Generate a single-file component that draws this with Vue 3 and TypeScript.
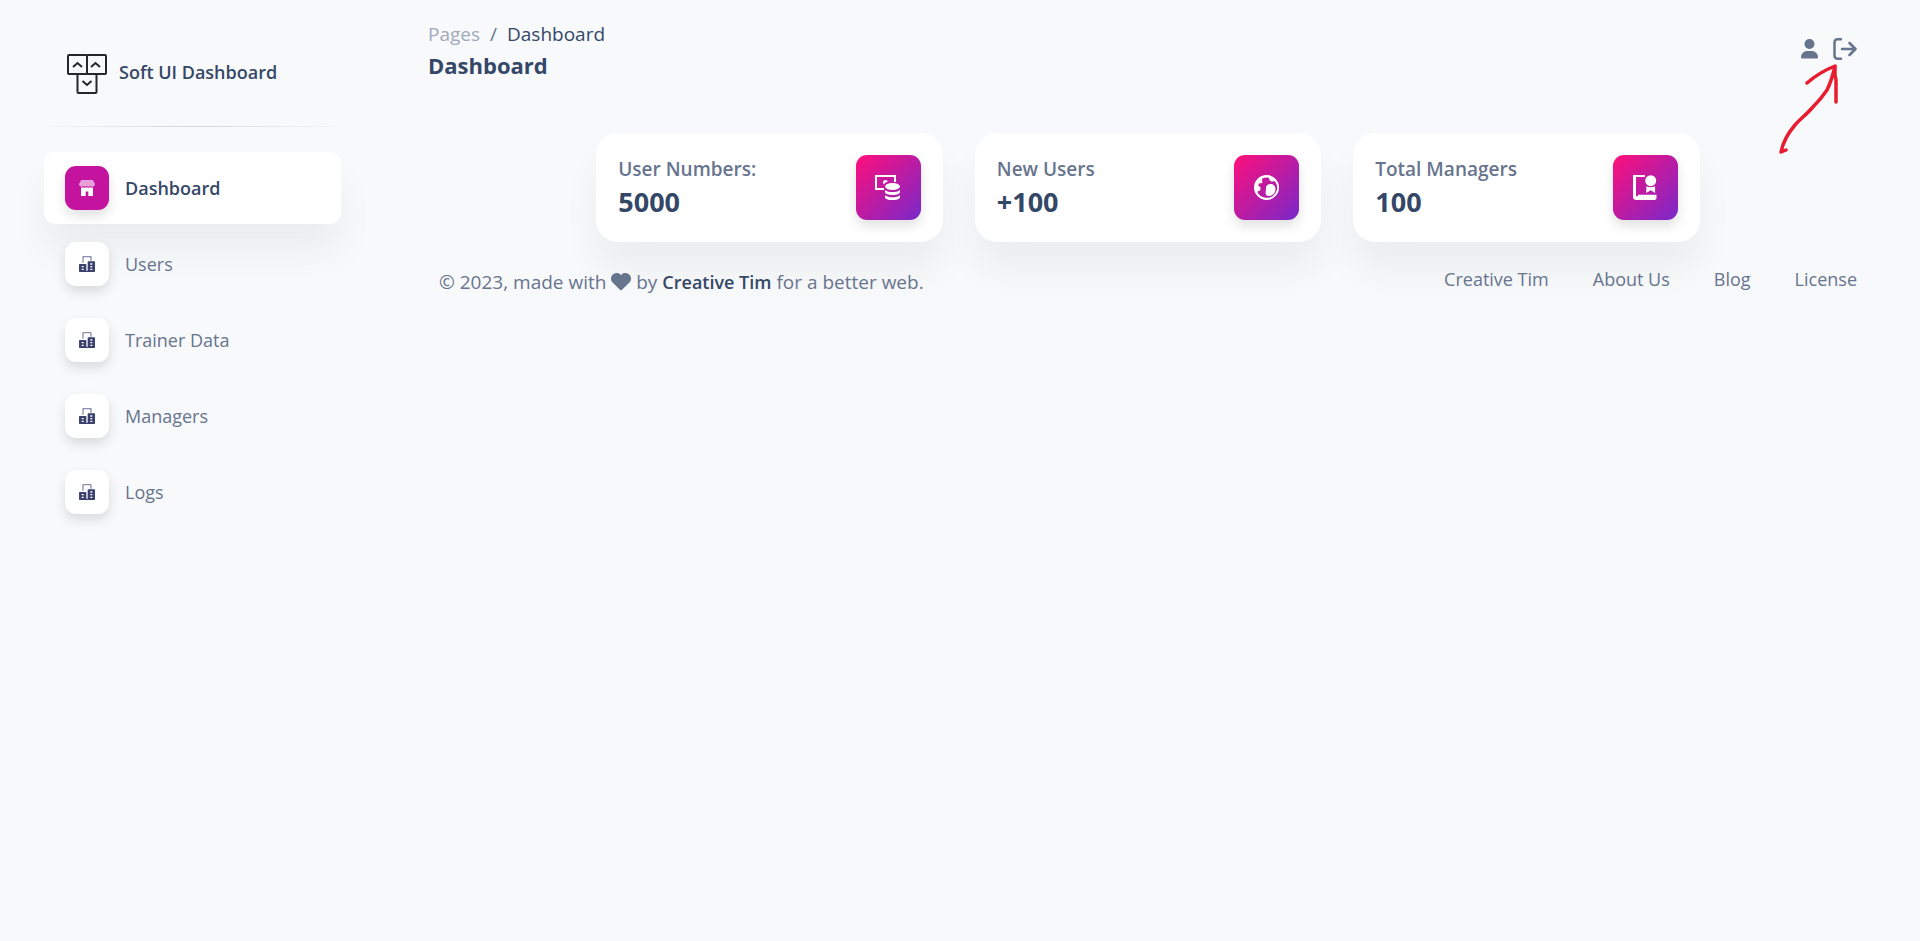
<script setup lang="ts">
interface NavItem {
  label: string
  icon: 'shop' | 'office'
  active: boolean
}

interface Stat {
  label: string
  value: string
  icon: 'coins' | 'world' | 'diploma'
}

const navItems: NavItem[] = [
  { label: 'Dashboard', icon: 'shop', active: true },
  { label: 'Users', icon: 'office', active: false },
  { label: 'Trainer Data', icon: 'office', active: false },
  { label: 'Managers', icon: 'office', active: false },
  { label: 'Logs', icon: 'office', active: false },
]

const stats: Stat[] = [
  { label: 'User Numbers:', value: '5000', icon: 'coins' },
  { label: 'New Users', value: '+100', icon: 'world' },
  { label: 'Total Managers', value: '100', icon: 'diploma' },
]

const footerLinks: string[] = ['Creative Tim', 'About Us', 'Blog', 'License']
</script>

<template>
  <div class="layout">
    <aside class="sidebar">
      <a class="brand" href="#">
        <svg class="brand-logo" viewBox="0 0 40 40" fill="none" stroke="#252827" stroke-width="2" aria-hidden="true">
          <rect x="1" y="1" width="19" height="19" rx="1" />
          <rect x="20" y="1" width="19" height="19" rx="1" />
          <rect x="10.500" y="20" width="19" height="19" rx="1" />
          <path d="M6 13l4.500-4 4.500 4M24 13l4.500-4 4.500 4M15.500 27l4.500 4 4.500-4" />
        </svg>
        <span class="brand-name">Soft UI Dashboard</span>
      </a>
      <hr class="divider" />
      <nav class="nav" aria-label="Main">
        <a
          v-for="item in navItems"
          :key="item.label"
          href="#"
          class="nav-link"
          :class="{ active: item.active }"
        >
          <span class="nav-icon">
            <svg v-if="item.icon === 'shop'" viewBox="0 0 47 47" fill="#fff" aria-hidden="true">
              <path opacity="0.6" d="M46.720 10.741L40.845.950A1.960 1.960 0 0 0 39.167 0H7.833c-.687 0-1.324.361-1.678.950L.280 10.741A1.960 1.960 0 0 0 0 11.750c0 4.316 3.484 7.822 7.800 7.833 1.950.005 3.817-.711 5.252-2.007 2.965 2.680 7.477 2.680 10.442 0 2.966 2.686 7.485 2.686 10.452 0 2.296 2.072 5.598 2.595 8.422 1.334A7.800 7.800 0 0 0 47 11.750c0-.355-.097-.704-.280-1.009z" />
              <path d="M39.198 22.491c-1.820.002-3.616-.476-5.246-1.396-2.809 1.589-6.027 1.837-8.968.705a12 12 0 0 1-1.488-.698c-2.800 1.585-6.017 1.832-8.957.698a12 12 0 0 1-1.487-.698 10.600 10.600 0 0 1-7.177 1.189v22.431c0 1.228.877 2.223 1.958 2.223h11.750V33.607h7.834v13.338h11.750c1.081 0 1.958-.995 1.958-2.223v-22.440c-.636.130-1.281.200-1.927.209z" />
            </svg>
            <svg v-else viewBox="0 0 42 42" fill="#3a416f" aria-hidden="true">
              <path opacity="0.6" d="M12.250 17.500h-3.500V1.750C8.750.782 9.532 0 10.500 0h21c.968 0 1.750.782 1.750 1.750v10.500h-3.500V3.500h-17.500z" />
              <path d="M40.250 14H24.500c-.968 0-1.750.782-1.750 1.750V38.500h-3.500V22.750c0-.968-.782-1.750-1.750-1.750H1.750C.782 21 0 21.782 0 22.750v17.500C0 41.218.782 42 1.750 42h38.500c.968 0 1.750-.782 1.750-1.750v-24.500c0-.968-.782-1.750-1.750-1.750zm-28 22.750H7v-3.500h5.250zm0-7H7v-3.500h5.250zm22.750 7h-5.250v-3.500H35zm0-7h-5.250v-3.500H35zm0-7h-5.250v-3.500H35z" />
            </svg>
          </span>
          <span>{{ item.label }}</span>
        </a>
      </nav>
    </aside>

    <div class="page">
      <header class="topbar">
        <div>
          <nav class="breadcrumb" aria-label="Breadcrumb">
            <a href="#">Pages</a>
            <span>/</span>
            <span class="current">Dashboard</span>
          </nav>
          <h1 class="title">Dashboard</h1>
        </div>
        <div class="actions">
          <button class="icon-button" type="button" aria-label="Profile">
            <svg width="17" height="20" viewBox="0 0 17 20" fill="currentColor" aria-hidden="true">
              <circle cx="8.500" cy="5" r="5" />
              <path d="M0 18.500C0 14.500 3 12 6.500 12h4c3.500 0 6.500 2.500 6.500 6.500 0 .6-.3.900-.9.900H.9c-.6 0-.9-.3-.9-.9z" />
            </svg>
          </button>
          <button class="icon-button" type="button" aria-label="Sign out">
            <svg width="24" height="22" viewBox="0 0 24 22" fill="none" stroke="currentColor" stroke-width="2.500" stroke-linecap="round" stroke-linejoin="round" aria-hidden="true">
              <path d="M8 1.300H4.500a3 3 0 0 0-3 3v13.400a3 3 0 0 0 3 3H8M9 11h13M16.500 5l6 6-6 6" />
            </svg>
          </button>
        </div>
      </header>

      <main class="stats">
        <div v-for="stat in stats" :key="stat.label" class="stat-column">
          <section class="card">
            <div>
              <p class="stat-label">{{ stat.label }}</p>
              <p class="stat-value">{{ stat.value }}</p>
            </div>
            <div class="stat-icon">
              <svg v-if="stat.icon === 'coins'" viewBox="0 0 26 26" fill="#fff" aria-hidden="true">
                <path d="M0 0h21v7h-2V2H2v11h7v2H0z" />
                <path d="M8 7.500C8 6 9 5 10.500 5c1.200 0 1.900.6 2.300 1.500C11 7.200 9.500 8 9 9.500 8.400 9 8 8.300 8 7.500z" />
                <ellipse cx="17.500" cy="11.500" rx="7.500" ry="3.500" />
                <path d="M10 15c2 1.700 4.600 2 7.500 2s5.500-.3 7.500-2v2c0 1.700-3.400 3-7.500 3S10 18.700 10 17z" />
                <path d="M10 20.300c2 1.600 4.600 2 7.500 2s5.500-.4 7.500-2v1.900c0 1.700-3.400 2.900-7.500 2.900S10 23.900 10 22.200z" />
              </svg>
              <svg v-else-if="stat.icon === 'world'" viewBox="0 0 26 26" fill="#fff" aria-hidden="true">
                <path fill-rule="evenodd" d="M12.500 0a12.500 12.500 0 1 0 0 25 12.500 12.500 0 0 0 0-25zM8 3.800c1.800-1 3.800-1.500 6-1.200 1 .6 1.500 1.500 1.600 2.600l1.700 1.300 3.600-.2a10.200 10.200 0 0 1-9.400 16.400C7.500 22 4.500 20 3.300 16.800l3-1.600.2-2.900-2.300-1.800L5 8.500l3.300-.4z" />
                <path d="M12 13c0-2.500 2-4 4.500-4 2.800 0 5 2 5 5 0 4-3 7-6.500 7-2.300 0-3.600-1.500-3.400-3.500.1-1.500.4-3 .4-4.500z" />
              </svg>
              <svg v-else viewBox="0 0 26 26" fill="#fff" aria-hidden="true">
                <path d="M1 0h12v2H4v18c.1 2 2 2 2-.2h18.500V23a2 2 0 0 1-2 2h-18A3.500 3.500 0 0 1 1 21.500z" />
                <circle cx="18.700" cy="5.700" r="5.500" />
                <path d="M14.300 11.200c2.700 1.500 6.100 1.500 8.800 0V18l-4.400-2.800-4.400 2.800z" />
              </svg>
            </div>
          </section>
        </div>
      </main>

      <footer class="footer">
        <p class="copyright">
          © 2023, made with
          <svg class="heart" viewBox="0 0 20 18" fill="currentColor" aria-hidden="true">
            <path d="M10 2.200C8-.6 4.100-.6 1.800 1.400-.6 3.700-.6 7.300 1.600 9.600L9.200 17c.5.400 1.100.4 1.600 0l7.600-7.400c2.200-2.300 2.200-5.900-.2-8.200C15.900-.6 12-.6 10 2.200z" />
          </svg>
          by <a href="#">Creative Tim</a> for a better web.
        </p>
        <nav class="footer-links" aria-label="Footer">
          <a v-for="link in footerLinks" :key="link" href="#">{{ link }}</a>
        </nav>
      </footer>
    </div>

    <svg class="pointer" width="64" height="94" viewBox="0 0 64 94" fill="none" stroke="#e81c2e" stroke-width="3.500" stroke-linecap="round" stroke-linejoin="round" aria-hidden="true">
      <path d="M7 86l-5 2C4 78 10 68 16 61c5-6 11-10 17-17 6-6 11-12 15-18 3-6 5-12 7-20M28 19c8-7 18-13 28-17v9l1 5v22" />
    </svg>
  </div>
</template>

<style>
body {
  margin: 0;
  background: #f8f9fb;
}
</style>

<style scoped>
.layout {
  position: relative;
  display: flex;
  min-height: 100vh;
  background: #f8f9fb;
  color: #67748e;
  font-family: "Open Sans", "Noto Sans", sans-serif;
  font-size: 19px;
  line-height: 28px;
}

a {
  color: inherit;
  text-decoration: none;
}

p,
h1 {
  margin: 0;
}

.sidebar {
  flex: none;
  box-sizing: border-box;
  width: 376px;
  padding: 22px 24px 0 33px;
}

.brand {
  display: flex;
  align-items: flex-start;
  gap: 12px;
  height: 104px;
  padding: 32px 0 0 34px;
  box-sizing: border-box;
  color: #344767;
  font-size: 18px;
  font-weight: 600;
}

.brand-logo {
  width: 40px;
  height: 40px;
}

.brand-name {
  line-height: 36px;
}

.divider {
  height: 1px;
  margin: 0 0 25px;
  border: 0;
  background: linear-gradient(90deg, transparent, rgba(0, 0, 0, 0.14), transparent);
}

.nav {
  display: flex;
  flex-direction: column;
  gap: 4px;
  padding: 0 11px;
}

.nav-link {
  display: flex;
  align-items: center;
  gap: 16px;
  box-sizing: border-box;
  height: 72px;
  padding: 0 21px;
  border-radius: 11px;
  font-size: 18px;
}

.nav-link.active {
  background: #fff;
  color: #344767;
  font-weight: 600;
  box-shadow: 0 28px 37px rgba(0, 0, 0, 0.05);
}

.nav-icon {
  display: grid;
  place-items: center;
  width: 44px;
  height: 44px;
  border-radius: 11px;
  background: #fff;
  box-shadow: 0 6px 12px rgba(0, 0, 0, 0.12);
}

.nav-icon svg {
  width: 16px;
  height: 16px;
}

.active .nav-icon {
  background: #c4149f;
}

.page {
  flex: 1;
  min-width: 0;
}

.topbar {
  display: flex;
  justify-content: space-between;
  align-items: flex-start;
  padding: 20px 63px 51px 52px;
}

.breadcrumb {
  display: flex;
  gap: 10px;
}

.breadcrumb a {
  opacity: 0.6;
}

.breadcrumb .current {
  color: #344767;
}

.title {
  color: #344767;
  font-size: 22px;
  font-weight: 700;
  line-height: 34px;
}

.actions {
  display: flex;
  gap: 15px;
  padding-top: 18px;
}

.icon-button {
  display: flex;
  align-items: center;
  padding: 0;
  border: 0;
  background: none;
  color: #67748e;
}

.stats {
  display: flex;
  justify-content: center;
  padding: 0 15px;
}

.stat-column {
  flex: 0 0 25%;
  box-sizing: border-box;
  padding: 0 16px;
}

.card {
  display: flex;
  justify-content: space-between;
  align-items: center;
  padding: 22px;
  border-radius: 22px;
  background: #fff;
  box-shadow: 0 28px 37px rgba(0, 0, 0, 0.05);
}

.stat-label {
  font-weight: 600;
}

.stat-value {
  color: #344767;
  font-size: 27px;
  font-weight: 700;
  line-height: 37px;
}

.stat-icon {
  display: grid;
  place-items: center;
  width: 65px;
  height: 65px;
  border-radius: 11px;
  background: linear-gradient(135deg, #ff0f7b, #7928ca);
  box-shadow: 0 6px 12px rgba(0, 0, 0, 0.12);
}

.stat-icon svg {
  width: 26px;
  height: 26px;
}

.footer {
  display: flex;
  justify-content: space-between;
  padding: 23px 63px 0 63px;
}

.copyright {
  padding-top: 3px;
}

.copyright a {
  color: #344767;
  font-size: 18px;
  font-weight: 600;
}

.heart {
  width: 20px;
  height: 18px;
  vertical-align: -2px;
}

.footer-links {
  display: flex;
  gap: 44px;
  font-size: 18px;
}

.pointer {
  position: absolute;
  top: 64px;
  right: 77px;
  pointer-events: none;
}
</style>
